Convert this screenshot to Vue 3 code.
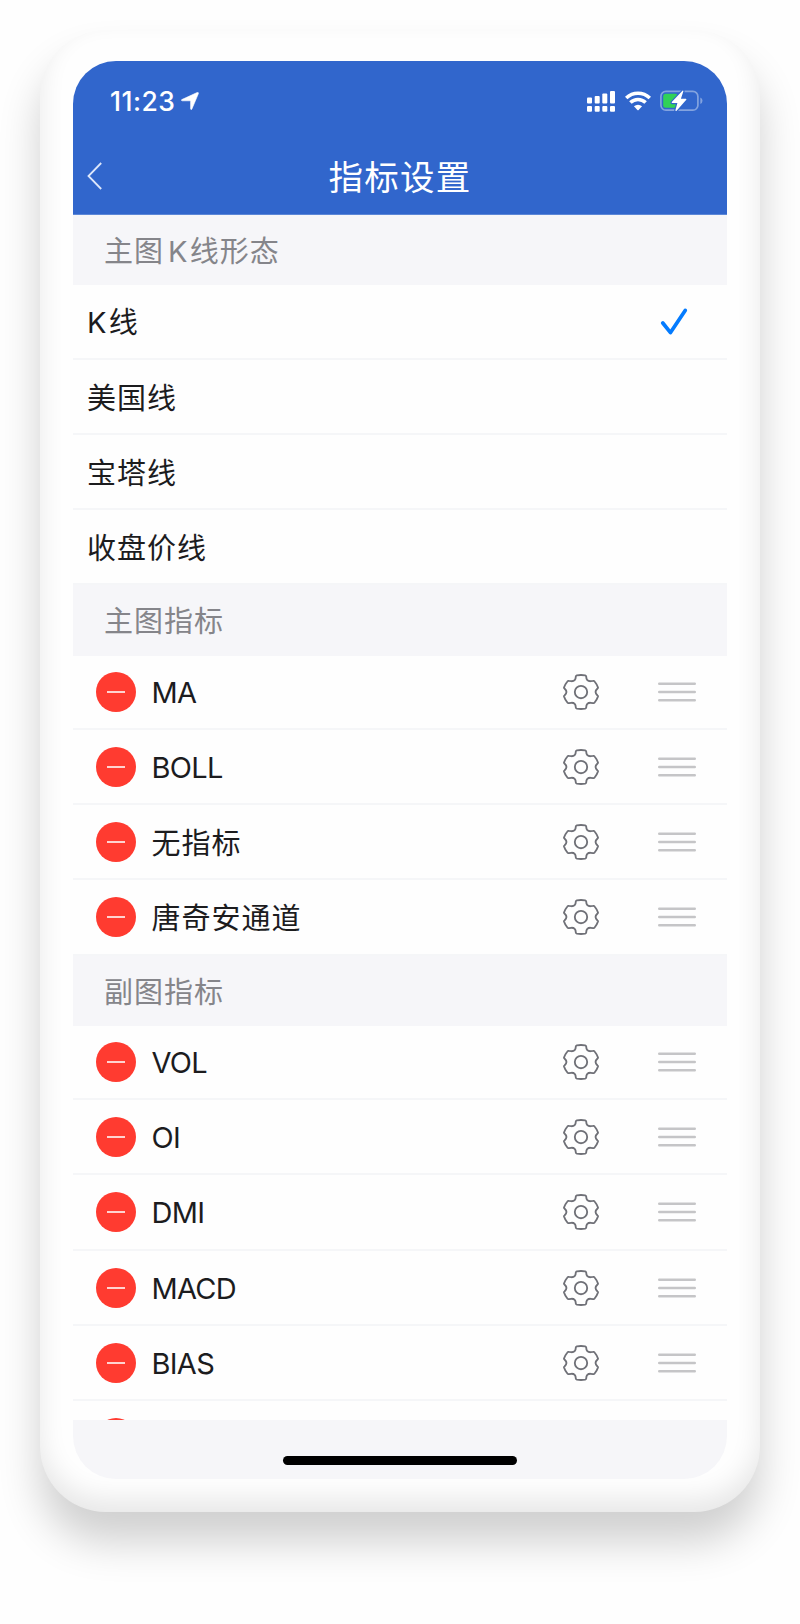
<script setup>
import { ref } from "vue";

const chartTypes = ref([
  { latin: "K", name: "线" },
  { name: "美国线" },
  { name: "宝塔线" },
  { name: "收盘价线" },
]);
const selected = ref(0);

const mainIndicators = ref(["MA", "BOLL", "无指标", "唐奇安通道"]);
const subIndicators = ref(["VOL", "OI", "DMI", "MACD", "BIAS"]);

// more: the list goes on under the bottom bar
const groups = [
  { title: "主图指标", items: mainIndicators },
  { title: "副图指标", items: subIndicators, more: true },
];

const isLatin = (name) => /^[A-Z]+$/.test(name);
</script>

<template>
  <div class="page">
    <div class="phone">
      <div class="screen">
        <header class="top">
          <div class="status">
            <span class="time">11:23</span>
            <svg class="location" viewBox="0 0 18 18">
              <path d="M.8 7.600 16.200.5q1.500-.4 1.200 1.100L10.900 17q-.8 1.300-1.300-.1V9.400q0-.6-.6-.6H1.200Q-.3 8.400.8 7.600Z" fill="#fff" stroke="#fff" stroke-width=".6" />
            </svg>
            <svg class="signal" viewBox="0 0 28 21">
              <g fill="#fff">
                <rect x="0" y="6.600" width="5" height="6" rx="1" />
                <rect x="7.700" y="5" width="5" height="7.600" rx="1" />
                <rect x="15.300" y="2.600" width="5" height="10" rx="1" />
                <rect x="23" y="0" width="5" height="12.600" rx="1" />
                <rect x="0" y="15" width="5" height="5.800" rx="1" />
                <rect x="7.700" y="15" width="5" height="5.800" rx="1" />
                <rect x="15.300" y="15" width="5" height="5.800" rx="1" />
                <rect x="23" y="15" width="5" height="5.800" rx="1" />
              </g>
            </svg>
            <svg class="wifi" viewBox="0 0 26 20">
              <g fill="none" stroke="#fff" stroke-width="3.600">
                <path d="M1.200 7A17 17 0 0 1 24.800 7" />
                <path d="M5.400 11.500A11 11 0 0 1 20.600 11.500" />
              </g>
              <path d="M8.900 15.300A6.500 6.500 0 0 1 17.100 15.300L13.600 19Q13 19.500 12.400 19Z" fill="#fff" />
            </svg>
            <svg class="battery" viewBox="0 0 43 22">
              <rect x=".9" y="1.400" width="37" height="18.800" rx="5" fill="none" stroke="#83a3df" stroke-width="1.700" />
              <path d="M40.300 7.500q2.200.9 2.200 3.300t-2.200 3.300z" fill="#83a3df" />
              <rect x="3.200" y="3.800" width="14.500" height="14" rx="2.500" fill="#30d158" />
              <path d="M22.700.6 11.800 12.100q-.5.9.5.9h5.100L15.400 20.300q.1 1.200 1.200.5L26.300 9.700q.5-.9-.5-.9h-4.900L23.400 1.200q0-1-.7-.6Z" fill="#fff" stroke="#3166cc" stroke-width="2.400" paint-order="stroke" />
            </svg>
          </div>
          <div class="navbar">
            <svg class="back" viewBox="0 0 16 28">
              <path d="M14.200 1 1.500 14 14.200 27" fill="none" stroke="#dce6fa" stroke-width="1.800" />
            </svg>
            <h1>指标设置</h1>
          </div>
        </header>

        <main class="content">
          <section>
            <h2>主图<span class="latin gap">K</span>线形态</h2>
            <ul>
              <li v-for="(type, i) in chartTypes" :key="type.name" class="row type" @click="selected = i">
                <span class="name"><span v-if="type.latin" class="latin">{{ type.latin }}</span>{{ type.name }}</span>
                <svg v-if="selected === i" class="check" viewBox="0 0 28 28">
                  <path d="M2.800 15 10.500 24.600 25.200 2.400" fill="none" stroke="#047bfe" stroke-width="3.700" stroke-linecap="round" stroke-linejoin="round" />
                </svg>
              </li>
            </ul>
          </section>

          <section v-for="group in groups" :key="group.title">
            <h2>{{ group.title }}</h2>
            <ul>
              <li v-for="name in group.items.value" :key="name" class="row indicator">
                <span class="remove"></span>
                <span class="name" :class="{ latin: isLatin(name) }">{{ name }}</span>
                <svg class="gear" viewBox="0 0 36 36">
                  <g fill="none" stroke="#6f7077" stroke-width="1.850" stroke-linejoin="round">
                    <circle cx="18" cy="18" r="6.200" />
                    <path d="M13.800 1.300Q18 .8 22.200 1.300Q23.100 1.500 23.200 2.500Q23.200 7.400 27.700 7.200L30 6.900Q31 6.600 31.600 7.500Q34 10.400 35 13.500Q35.100 14 34.500 14.500Q30.600 18 34.500 21.500Q35.100 22 35 22.500Q34 25.600 31.600 28.500Q31 29.400 30 29.100L27.700 28.800Q23.200 28.600 23.200 33.500Q23.100 34.500 22.200 34.700Q18 35.200 13.800 34.700Q12.900 34.500 12.800 33.500Q12.800 28.600 8.300 28.800L6 29.100Q5 29.400 4.400 28.500Q2 25.600 1 22.500Q.9 22 1.500 21.500Q5.400 18 1.500 14.500Q.9 14 1 13.500Q2 10.400 4.400 7.500Q5 6.600 6 6.900L8.300 7.200Q12.800 7.400 12.800 2.500Q12.900 1.500 13.800 1.300Z" />
                  </g>
                </svg>
                <svg class="drag" viewBox="0 0 38 20">
                  <path d="M1.200 1.700h35.600M1.200 10h35.600M1.200 18.300h35.600" stroke="#c5c5c7" stroke-width="2.400" stroke-linecap="round" />
                </svg>
              </li>
              <li v-if="group.more" class="row indicator">
                <span class="remove"></span>
              </li>
            </ul>
          </section>
        </main>

        <footer class="bottom">
          <div class="home"></div>
        </footer>
      </div>
    </div>
  </div>
</template>

<style>
body {
  margin: 0;
  background: #fefefe;
}
</style>

<style scoped>
.page {
  box-sizing: border-box;
  height: 1624px;
  padding: 30px 40px 0;
  overflow: hidden;
  background: #fefefe;
}

.phone {
  box-sizing: border-box;
  height: 1482px;
  padding: 31px 33px 33px;
  border-radius: 66px;
  background: #fefefe;
  box-shadow: 0 30px 42px rgba(0, 0, 0, 0.185), inset 0 -13px 26px rgba(0, 0, 0, 0.09);
  font-family: "Noto Sans CJK SC", sans-serif;
  color: #1c1c1e;
}

.screen {
  display: flex;
  flex-direction: column;
  height: 1418px;
  border-radius: 43px;
  overflow: hidden;
  background: #fefefe;
}

.top {
  flex: none;
  height: 153px;
  border-bottom: 1px solid #5c87d7;
  background: #3166cc;
  color: #fff;
}

.status {
  display: flex;
  align-items: center;
  height: 80px;
  padding: 0 24px 0 37px;
}

.time {
  width: 67px;
  font: 500 26.500px/32px Inter, sans-serif;
  letter-spacing: 0.5px;
}

.location {
  width: 18px;
  height: 18px;
  margin-left: 4px;
}

.signal {
  width: 28px;
  height: 21px;
  margin-left: auto;
}

.wifi {
  width: 26px;
  height: 20px;
  margin-left: 10px;
}

.battery {
  width: 43px;
  height: 22px;
  margin-left: 9px;
}

.navbar {
  position: relative;
  display: flex;
  align-items: center;
  justify-content: center;
  height: 67px;
}

.back {
  position: absolute;
  left: 14px;
  top: 21px;
  width: 16px;
  height: 28px;
}

h1 {
  margin: 0;
  font-size: 34.500px;
  font-weight: 400;
  line-height: 50px;
  letter-spacing: 1.2px;
}

.content {
  flex: 1;
  min-height: 0;
  overflow: hidden;
}

h2 {
  box-sizing: border-box;
  height: 70.300px;
  margin: 0;
  padding-left: 31px;
  background: #f6f6f9;
  color: #85858a;
  font-size: 29px;
  font-weight: 400;
  line-height: 68px;
  letter-spacing: 1px;
}

ul {
  margin: 0;
  padding: 0;
  list-style: none;
}

.row {
  box-sizing: border-box;
  display: flex;
  align-items: center;
  height: 75.200px;
  padding-top: 1px;
  border-bottom: 2px solid #f5f6f8;
}

.row:first-child {
  height: 74.400px;
}

.name {
  padding-bottom: 2px;
  font-size: 29px;
  line-height: 42px;
  letter-spacing: 1px;
}

.latin {
  font-family: Inter, sans-serif;
  font-size: 29px;
  letter-spacing: -0.7px;
}

.type {
  padding-left: 14px;
  padding-right: 39px;
}

.type:first-child .name {
  padding-bottom: 0;
}

.type .latin {
  margin-right: 3px;
}

.gap {
  margin: 0 3px 0 4px;
}

.check {
  width: 28px;
  height: 28px;
  margin-left: auto;
}

.indicator {
  padding-left: 23px;
  padding-right: 31px;
}

.indicator .latin {
  padding: 2px 0 0;
}

.remove {
  display: flex;
  align-items: center;
  justify-content: center;
  width: 40px;
  height: 40px;
  margin-right: 15.500px;
  border-radius: 50%;
  background: #ff3b30;
}

.remove::before {
  content: "";
  width: 18px;
  height: 2px;
  background: #ffd3d0;
}

.gear {
  width: 36px;
  height: 36px;
  margin-left: auto;
}

.drag {
  width: 38px;
  height: 20px;
  margin-left: 59px;
}

.bottom {
  flex: none;
  display: flex;
  align-items: flex-end;
  justify-content: center;
  height: 59.500px;
  background: #f6f6f9;
}

.home {
  width: 234px;
  height: 9px;
  margin-bottom: 14px;
  border-radius: 5px;
  background: #000;
}
</style>
